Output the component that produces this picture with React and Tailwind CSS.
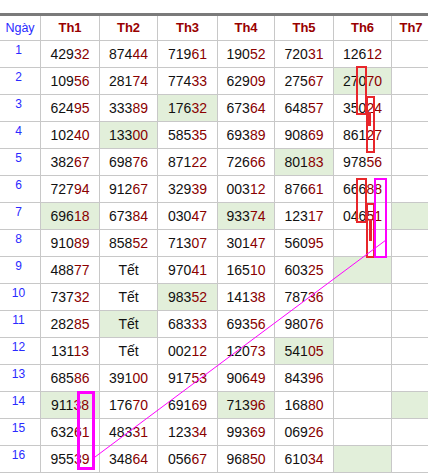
const cols = "grid grid-cols-[41px_59px_58px_60px_57px_59px_58px_39px]";

const rows = [
  ["42932", "87444", "71961", "19052", "72031", "12612", ""],
  ["10956", "28174", "77433", "62909", "27567", "27070", ""],
  ["62495", "33389", "17632", "67364", "64857", "35024", ""],
  ["10240", "13300", "58535", "69389", "90869", "86127", ""],
  ["38267", "69876", "87122", "72666", "80183", "97856", ""],
  ["72794", "91267", "32939", "00312", "87661", "66688", ""],
  ["69618", "67384", "03047", "93374", "12317", "04651", ""],
  ["91089", "85852", "71307", "30147", "56095", "", ""],
  ["48877", "Tết", "97041", "16510", "60325", "", ""],
  ["73732", "Tết", "98352", "14138", "78736", "", ""],
  ["28285", "Tết", "68333", "69356", "98076", "", ""],
  ["13113", "Tết", "00212", "12073", "54105", "", ""],
  ["68586", "39100", "91753", "90649", "84396", "", ""],
  ["91138", "17670", "69169", "71396", "16880", "", ""],
  ["63261", "48331", "12334", "99369", "06926", "", ""],
  ["95539", "34864", "05667", "96850", "61034", "", ""],
];

// [row, col] of highlighted cells
const green = {
  "2-5": 1, "3-2": 1, "4-1": 1, "5-4": 1,
  "7-0": 1, "7-3": 1, "7-6": 1, "9-5": 1,
  "10-2": 1, "11-1": 1, "12-4": 1,
  "14-0": 1, "14-3": 1, "14-6": 1, "16-5": 1,
};

function Value({ v }) {
  if (!v) return null;
  if (v === "Tết") return <span className="text-[#111]">Tết</span>;
  return (
    <span>
      <span className="text-[#111]">{v.slice(0, 3)}</span>
      <span className="text-[#8b0000]">{v.slice(3)}</span>
    </span>
  );
}

export default function App() {
  return (
    <div className="relative w-[428px] h-[476px] overflow-hidden bg-white font-['Liberation_Sans',Arial,sans-serif]">
      <div className="pt-[13px]">
        <div className={`${cols} border-t-[3px] border-[#7a7a7a] h-[28px]`}>
          <div className="flex items-center justify-center border-r border-b border-[#c8c8c8] text-[12.5px] text-[#2a2aff]">
            Ngày
          </div>
          {["Th1", "Th2", "Th3", "Th4", "Th5", "Th6", "Th7"].map((h) => (
            <div
              key={h}
              className="flex items-center justify-center border-r border-b border-[#c8c8c8] text-[13px] font-bold text-[#990000]"
            >
              {h}
            </div>
          ))}
        </div>
        {rows.map((r, i) => (
          <div key={i} className={`${cols} h-[27px]`}>
            <div className="flex items-start justify-center pt-[3px] pr-[3px] border-r border-b border-[#c8c8c8] text-[12px] leading-none text-[#2a2aff]">
              {i + 1}
            </div>
            {r.map((v, j) => (
              <div
                key={j}
                className={`flex items-center justify-center border-r border-b border-[#c8c8c8] text-[14px] ${
                  green[`${i + 1}-${j}`] ? "bg-[#e2efda]" : ""
                }`}
              >
                <Value v={v} />
              </div>
            ))}
          </div>
        ))}
      </div>

      <svg
        className="absolute left-0 top-0 pointer-events-none"
        width="428"
        height="476"
        viewBox="0 0 428 476"
      >
        <g fill="none" stroke="#e8262b" strokeWidth="2">
          <rect x="357" y="67" width="9" height="47" />
          <rect x="367" y="97" width="7" height="55" />
          <rect x="357" y="179" width="9" height="43" />
          <rect x="367" y="204" width="7" height="53" />
        </g>
        <rect x="368" y="112" width="3" height="14" fill="#e8262b" />
        <rect x="369" y="219" width="3" height="22" fill="#e8262b" />
        <rect x="375" y="179" width="11" height="78" fill="none" stroke="#ff00ff" strokeWidth="2" />
        <rect x="78.5" y="392.5" width="15" height="76" fill="none" stroke="#ff00ff" strokeWidth="3" />
        <line x1="386" y1="240" x2="95" y2="457" stroke="#ff00ff" strokeWidth="1" />
      </svg>
    </div>
  );
}
